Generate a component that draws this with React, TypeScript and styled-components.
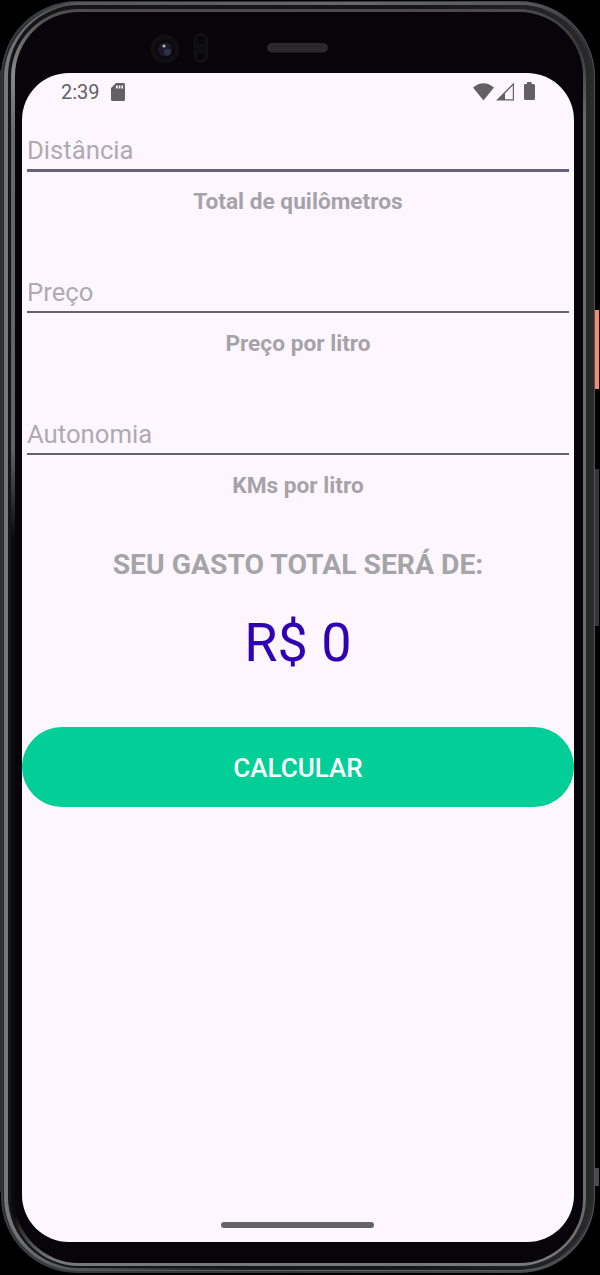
import React from 'react';
import styled, { createGlobalStyle } from 'styled-components';

const Global = createGlobalStyle`
  *, *::before, *::after { box-sizing: border-box; }
  body { margin: 0; background: #000; font-family: Roboto, "Liberation Sans", sans-serif; }
`;

const Stage = styled.main`
  position: relative;
  width: 600px;
  height: 1275px;
  padding: 1px 5px 2px 1px;
  background: #000;
  overflow: hidden;
`;

const Shell = styled.div`
  height: 100%;
  padding: 1px 1px 2px 2px;
  border-radius: 76px;
  background: linear-gradient(90deg, #3a3b3c 0, #333 50%, #505153 100%);
`;

const Rim = styled.div`
  height: 100%;
  padding: 3px 3px 1px 1px;
  border-radius: 75px;
  background: linear-gradient(90deg, #202122 0, #555758 12%, #666869 60%, #555658 90%, #2b2b2d 100%);
`;

const Band = styled.div`
  height: 100%;
  padding: 0 0 2px 4px;
  border-radius: 73px;
  background: linear-gradient(90deg, #78797a 0, #535455 12%, #1b1b1c 40%, #1b1b1c 100%);
`;

const Groove = styled.div`
  height: 100%;
  padding: 4px 5px 2px 3px;
  border-radius: 71px;
  background: linear-gradient(90deg, #151516 0, #161617 70%, #29292b 100%);
`;

const Edge = styled.div`
  height: 100%;
  padding: 3px 3px 3px 4px;
  border-radius: 68px;
  background:
    linear-gradient(180deg, #4b4b4c 0, #88898a 5%, #666768 10%, #606162 35%, #0b0a0c 42%, #0b0a0c 96%, #777879 99.5%) left / 285px 100% no-repeat,
    linear-gradient(180deg, #4b4b4c 0, #3a3a3b 3%, #6a6b6c 9%, #6a6b6c 96%, #777879 99.5%);
`;

const Bezel = styled.div`
  height: 100%;
  display: flex;
  flex-direction: column;
  padding: 0 9px 21px 7px;
  border-radius: 64px;
  background: #070509;
`;

const SensorBar = styled.div`
  height: 61px;
  flex: none;
  display: flex;
  align-items: flex-start;
  padding: 21px 0 0 127px;
`;

const Screen = styled.section`
  flex: 1;
  min-height: 0;
  display: flex;
  flex-direction: column;
  border-radius: 47px;
  background: #fdf6ff;
  overflow: hidden;
`;

const StatusBar = styled.header`
  height: 37px;
  flex: none;
  display: flex;
  justify-content: space-between;
  padding: 0 37px 0 39px;
  color: #626064;
  font-size: 20px;
  line-height: 38px;
`;

const StatusGroup = styled.div`
  display: flex;
  align-items: center;
  svg { display: block; }
`;

const CardIcon = styled.svg`
  margin-left: 10px;
`;

const Field = styled.label`
  display: flex;
  flex-direction: column;
  height: 142px;
  flex: none;
  padding: 20px 5px 0;
`;

const Input = styled.input<{ $focused?: boolean }>`
  height: ${p => (p.$focused ? 42 : 41)}px;
  width: 100%;
  padding: 0;
  border: 0;
  border-bottom: ${p => (p.$focused ? '3px solid #66607b' : '2px solid #66626a')};
  outline: 0;
  background: transparent;
  color: #49454f;
  font: 400 25.7px/37px Roboto, "Liberation Sans", sans-serif;

  &::placeholder { color: #aeaab1; opacity: 1; }
`;

const Hint = styled.span`
  margin-top: auto;
  margin-bottom: 35px;
  color: #a5a3a8;
  font-size: 22.7px;
  font-weight: 700;
  line-height: 30px;
  text-align: center;
`;

const ResultTitle = styled.h1`
  margin: 11px 0 0;
  color: #a5a4a7;
  font-size: 28.3px;
  font-weight: 700;
  line-height: 36px;
  text-align: center;
`;

const Total = styled.output`
  margin-top: 25px;
  color: #3000b3;
  font-size: 54px;
  line-height: 70px;
  text-align: center;
`;

const CalculateButton = styled.button`
  height: 80px;
  flex: none;
  margin-top: 49px;
  padding: 2px 0 0;
  border: 0;
  border-radius: 40px;
  background: #02ce98;
  color: #fff;
  font: 500 26px/30px Roboto, "Liberation Sans", sans-serif;
`;

const HomeHandle = styled.div`
  width: 153px;
  height: 6px;
  margin: auto auto 14px 199px;
  border-radius: 3px;
  background: #656268;
`;

const SideKey = styled.i<{ $top: number; $height: number; $color: string; $left?: boolean }>`
  position: absolute;
  top: ${p => p.$top}px;
  ${p => (p.$left ? 'left: 0; width: 2px;' : 'left: 595px; width: 4px;')}
  height: ${p => p.$height}px;
  background: ${p => p.$color};
`;

const Sensors = () => (
  <svg width="190" height="40" viewBox="0 0 190 40">
    <circle cx="16" cy="16" r="14.5" fill="#100f12" />
    <circle cx="16" cy="16" r="10" fill="#0a0a0d" />
    <circle cx="16" cy="16.5" r="7" fill="#191a25" />
    <circle cx="18.500" cy="19" r="3.500" fill="#30304a" />
    <circle cx="15" cy="13" r="1.6" fill="#b0afb8" />
    <rect x="45.500" y="0.500" width="13" height="29" rx="6.500" fill="#0e0d10" stroke="#141316" />
    <circle cx="52" cy="7" r="4.500" fill="#070609" stroke="#151417" />
    <circle cx="52" cy="23" r="4.500" fill="#070609" stroke="#151417" />
    <rect x="118" y="10" width="61" height="9.500" rx="4.750" fill="#29292b" />
  </svg>
);

const SdCard = () => (
  <CardIcon width="16" height="18" viewBox="0 0 16 18">
    <path fill="#626064" fillRule="evenodd" d="M6 0H13.500Q15 0 15 1.500V16.500Q15 18 13.500 18H2.500Q1 18 1 16.500V5Z M6 2.500V5.500H7.700V2.500Z M8.700 2.500V5.500H10.400V2.500Z M11.400 2.500V5.500H13.100V2.500Z" />
  </CardIcon>
);

const SystemIcons = () => (
  <svg width="64" height="20" viewBox="0 0 64 20" fill="#626064">
    <path d="M0 5.500Q10.500-3 21 5.500L10.500 18.500Z" />
    <path fillRule="evenodd" d="M41 0.500V18.500H23Z M39.800 3.500L32 11.500V17.300H39.800Z" />
    <path d="M52 2H54V0H58.500V2H60.500Q62 2 62 3.500V16.500Q62 18 60.500 18H52.500Q51 18 51 16.500V3.500Q51 2 52 2Z" />
  </svg>
);

const fields = [
  { name: 'Distância', hint: 'Total de quilômetros', focused: true },
  { name: 'Preço', hint: 'Preço por litro' },
  { name: 'Autonomia', hint: 'KMs por litro' },
];

export default function App() {
  return (
    <>
      <Global />
      <Stage>
        <SideKey $left $top={70} $height={1122} $color="#2e2f30" />
        <Shell><Rim><Band><Groove><Edge><Bezel>
          <SensorBar><Sensors /></SensorBar>
          <Screen>
            <StatusBar>
              <StatusGroup>2:39<SdCard /></StatusGroup>
              <StatusGroup><SystemIcons /></StatusGroup>
            </StatusBar>
            {fields.map(f => (
              <Field key={f.name}>
                <Input placeholder={f.name} $focused={f.focused} />
                <Hint>{f.hint}</Hint>
              </Field>
            ))}
            <ResultTitle>SEU GASTO TOTAL SERÁ DE:</ResultTitle>
            <Total>R$ 0</Total>
            <CalculateButton type="button">CALCULAR</CalculateButton>
            <HomeHandle />
          </Screen>
        </Bezel></Edge></Groove></Band></Rim></Shell>
        <SideKey $top={310} $height={79} $color="#f98a70" />
        <SideKey $top={469} $height={157} $color="#353637" />
        <SideKey $top={1168} $height={18} $color="#4a4b4c" />
      </Stage>
    </>
  );
}
